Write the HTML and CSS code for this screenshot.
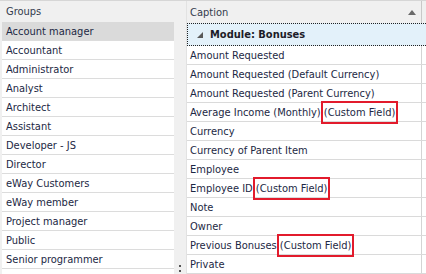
FILE: index.html
```html
<!DOCTYPE html>
<html lang="en">
<head>
    <meta charset="UTF-8">
    <title>Field permissions</title>
    <link rel="stylesheet" href="styles.css">
</head>
<body>

    <div class="layout">
        <div class="groups">
            <div class="groups-header">Groups</div>
            <div class="group-list">
                <div class="group selected">Account manager</div>
                <div class="group">Accountant</div>
                <div class="group">Administrator</div>
                <div class="group">Analyst</div>
                <div class="group">Architect</div>
                <div class="group">Assistant</div>
                <div class="group">Developer - JS</div>
                <div class="group">Director</div>
                <div class="group">eWay Customers</div>
                <div class="group">eWay member</div>
                <div class="group">Project manager</div>
                <div class="group">Public</div>
                <div class="group">Senior programmer</div>
            </div>
        </div>

        <div class="splitter">
            <span class="dot"></span>
            <span class="dot"></span>
        </div>

        <div class="fields">
            <div class="fields-header">
                <div class="caption-col">
                    <span>Caption</span>
                    <span class="sort-arrow"></span>
                </div>
            </div>

            <div class="module-row">
                <span class="expander"></span>
                <span class="module-title">Module: Bonuses</span>
            </div>

            <div class="field"><div class="cell">Amount Requested</div></div>
            <div class="field"><div class="cell">Amount Requested (Default Currency)</div></div>
            <div class="field"><div class="cell">Amount Requested (Parent Currency)</div></div>
            <div class="field"><div class="cell">Average Income (Monthly) <span class="custom">(Custom Field)</span></div></div>
            <div class="field"><div class="cell">Currency</div></div>
            <div class="field"><div class="cell">Currency of Parent Item</div></div>
            <div class="field"><div class="cell">Employee</div></div>
            <div class="field"><div class="cell">Employee ID <span class="custom">(Custom Field)</span></div></div>
            <div class="field"><div class="cell">Note</div></div>
            <div class="field"><div class="cell">Owner</div></div>
            <div class="field"><div class="cell">Previous Bonuses <span class="custom">(Custom Field)</span></div></div>
            <div class="field"><div class="cell">Private</div></div>
        </div>
    </div>

</body>
</html>
```

FILE: styles.css
```css
body {
    margin: 0;
    padding: 0;
    font-family: 'DejaVu Sans Condensed', 'DejaVu Sans', sans-serif;
    font-size: 11px;
    color: #1c2844;
    background-color: #f0f0f0;
    border-top: 1px solid #d6d6d6;
    height: 273px;
    overflow: hidden;
}

.layout {
    display: flex;
    height: 100%;
}

/* left list */
.groups {
    width: 172px;
    margin-left: 2px;
    display: flex;
    flex-direction: column;
}

.groups-header {
    height: 21px;
    line-height: 21px;
    padding-left: 4px;
    color: #333b4d;
}

.group-list {
    flex: 1;
    background-color: #fff;
}

.group {
    height: 18px;
    line-height: 19px;
    padding-left: 4px;
    border-bottom: 1px solid #dcdcdc;
    white-space: nowrap;
}

.group.selected {
    background-color: #dadada;
}

.splitter {
    width: 12px;
    display: flex;
    flex-direction: column;
    align-items: center;
    justify-content: flex-end;
    gap: 3px;
    padding-bottom: 2px;
}

.dot {
    width: 2px;
    height: 2px;
    background-color: #555;
}

/* right grid */
.fields {
    flex: 1;
    background-color: #fff;
    border-left: 1px solid #e2e2e2;
}

.fields-header {
    height: 22px;
    background-color: #f0f0f0;
}

.caption-col {
    width: 231px;
    height: 100%;
    padding-left: 3px;
    border-right: 1px solid #c8c8c8;
    display: flex;
    align-items: center;
    justify-content: space-between;
    color: #333b4d;
}

.sort-arrow {
    width: 0;
    height: 0;
    margin-right: 5px;
    border-left: 4px solid transparent;
    border-right: 4px solid transparent;
    border-bottom: 5px solid #6a6a6a;
}

.module-row {
    height: 21px;
    display: flex;
    align-items: center;
    background-color: #e3f1fa;
    border: 1px dotted #222;
    border-right: none;
}

.expander {
    width: 0;
    height: 0;
    margin-left: 9px;
    margin-right: 7px;
    border-left: 6px solid transparent;
    border-bottom: 6px solid #595959;
}

.module-title {
    font-weight: bold;
    font-size: 11px;
    color: #1c1c28;
}

.field {
    border-bottom: 1px solid #dadada;
}

.cell {
    width: 231px;
    height: 18px;
    line-height: 19px;
    padding-left: 3px;
    border-right: 1px solid #d4d4d4;
    white-space: nowrap;
}

.custom {
    position: relative;
}

.custom::after {
    content: "";
    position: absolute;
    top: -5px;
    bottom: -5px;
    left: -3px;
    right: -3px;
    border: 2px solid #e21b2c;
}
```
